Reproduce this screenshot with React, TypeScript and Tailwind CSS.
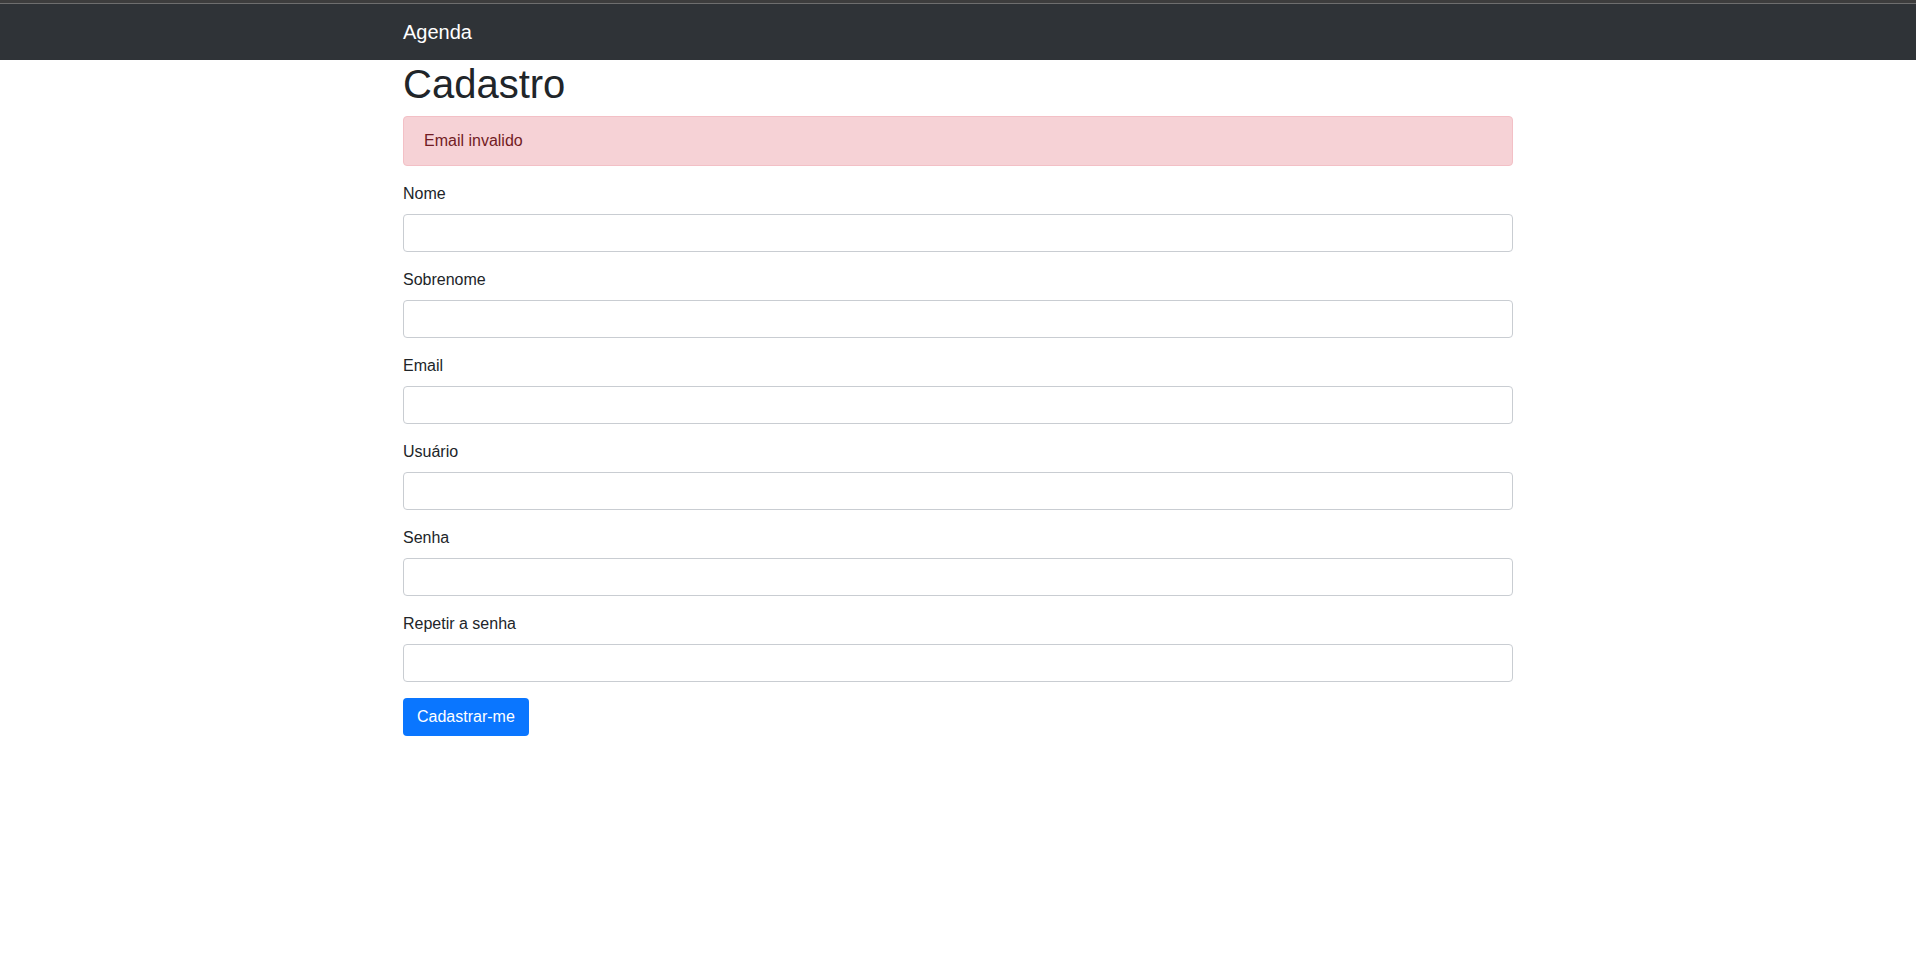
import React from 'react';

// --- Form fields ---
const fields = ['Nome', 'Sobrenome', 'Email', 'Usuário', 'Senha', 'Repetir a senha'];

function App() {
  return (
    <div className="min-h-screen bg-white text-[#212529] font-['Liberation_Sans',Arial,sans-serif] text-base">
      {/* top chrome strip */}
      <div className="h-[3px] bg-[#3d3d3d]"></div>
      <div className="h-px bg-[#6e6e6e]"></div>

      {/* Navbar */}
      <nav className="bg-[#2f3337] h-14 flex items-center">
        <div className="w-[1110px] mx-auto">
          <a className="text-white text-xl leading-[30px]">Agenda</a>
        </div>
      </nav>

      {/* Main content */}
      <main className="w-[1110px] mx-auto">
        <h1 className="text-[40px] leading-[48px] font-medium mb-2">Cadastro</h1>

        <div className="bg-[#f6d2d6] border border-[#f3c0c6] text-[#721c24] rounded px-5 py-3 leading-6 mb-4">
          Email invalido
        </div>

        <form>
          {fields.map((label) => (
            <div key={label} className="mb-4">
              <label className="block leading-6 mb-2">{label}</label>
              <input
                type="text"
                className="block w-full h-[38px] border border-[#c9cdd2] rounded px-3 bg-white"
              />
            </div>
          ))}
          <button
            type="button"
            className="bg-[#0a76ff] text-white rounded px-[14px] h-[38px] leading-6"
          >
            Cadastrar-me
          </button>
        </form>
      </main>
    </div>
  );
}

export default App;
